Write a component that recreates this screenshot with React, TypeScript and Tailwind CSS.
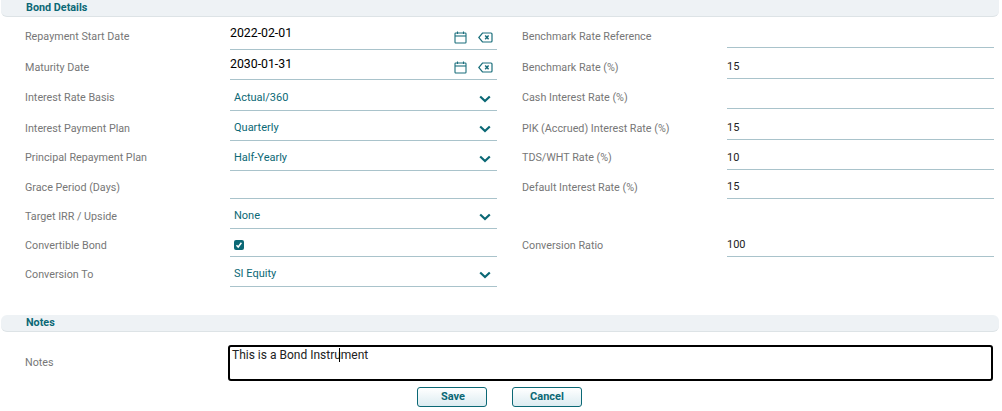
import { ReactNode } from "react";

const font = "font-['Roboto',sans-serif]";

function CalendarIcon() {
  return (
    <svg width="13" height="13" viewBox="0 0 13 13" fill="none" stroke="#1b6f7c" strokeWidth="1.1">
      <rect x="1" y="2" width="11" height="10" rx="0.8" />
      <path d="M1 5h11" />
      <path d="M3.5 0.5v2.5M9.5 0.5v2.5" />
    </svg>
  );
}

function ClearIcon() {
  return (
    <svg width="15" height="11" viewBox="0 0 15 11" fill="none" stroke="#1b6f7c" strokeWidth="1.2">
      <path d="M4.5 1H13a1 1 0 0 1 1 1v7a1 1 0 0 1-1 1H4.5L0.8 5.5z" />
      <path d="M7.2 3.6l3.4 3.6M10.6 3.6l-3.4 3.6" strokeWidth="1.5" />
    </svg>
  );
}

function Chevron() {
  return (
    <svg width="12" height="8" viewBox="0 0 12 8" fill="none" stroke="#0b6875" strokeWidth="2.2">
      <path d="M1.2 1.5L6 6l4.8-4.5" />
    </svg>
  );
}

function Field({
  label,
  h,
  pb = "pb-[4px]",
  children,
}: {
  label?: string;
  h: string;
  pb?: string;
  children?: ReactNode;
}) {
  return (
    <div className={`flex ${h}`}>
      <div className={`w-[205px] shrink-0 flex items-end text-[10.75px] leading-[14px] text-[#777777] ${pb}`}>{label}</div>
      <div className="flex-1 flex items-end border-b border-[#a9c3cb]">{children}</div>
    </div>
  );
}

function DateValue({ value, pb }: { value: string; pb: string }) {
  return (
    <div className="flex-1 flex items-end">
      <span className={`text-[12.3px] leading-[14px] text-black ${pb}`}>{value}</span>
      <span className="ml-auto flex items-center gap-[11px] pr-[4px] pb-[5px]">
        <CalendarIcon />
        <ClearIcon />
      </span>
    </div>
  );
}

function SelectValue({ value }: { value: string }) {
  return (
    <div className="flex-1 flex items-end pl-1 pr-[6px] pb-[5px] text-[11px] leading-[14px] text-[#0b6875]">
      <span>{value}</span>
      <span className="ml-auto flex mb-[2px]">
        <Chevron />
      </span>
    </div>
  );
}

function InputValue({ value }: { value?: string }) {
  return <span className="pb-[4px] text-[11px] leading-[14px] text-[#222222]">{value}</span>;
}

function SectionBar({ title, className }: { title: string; className: string }) {
  return (
    <div className={`flex items-center h-[17px] ml-px w-[998px] pl-[25px] bg-[#eef2f5] border-b border-[#dde3e6] text-[10.8px] font-bold text-[#0b6875] ${className}`}>
      {title}
    </div>
  );
}

export default function App() {
  return (
    <div className={`w-[1002px] h-[411px] bg-white overflow-hidden ${font}`}>
      <SectionBar title="Bond Details" className="rounded-b-md" />
      <div className="flex pl-[25px] pr-[8px]">
        <div className="w-[472px]">
          <Field label="Repayment Start Date" h="h-[33px]" pb="pb-[6px]">
            <DateValue value="2022-02-01" pb="pb-[9px]" />
          </Field>
          <Field label="Maturity Date" h="h-[30px]" pb="pb-[5px]">
            <DateValue value="2030-01-31" pb="pb-[8px]" />
          </Field>
          <Field label="Interest Rate Basis" h="h-[31px]" pb="pb-[6px]">
            <SelectValue value="Actual/360" />
          </Field>
          <Field label="Interest Payment Plan" h="h-[30px]" pb="pb-[5px]">
            <SelectValue value="Quarterly" />
          </Field>
          <Field label="Principal Repayment Plan" h="h-[30px]" pb="pb-[6px]">
            <SelectValue value="Half-Yearly" />
          </Field>
          <Field label="Grace Period (Days)" h="h-[28px]" />
          <Field label="Target IRR / Upside" h="h-[30px]" pb="pb-[5px]">
            <SelectValue value="None" />
          </Field>
          <Field label="Convertible Bond" h="h-[28px]">
            <span className="ml-1 mb-[6px] w-[10px] h-[10px] rounded-[2px] bg-[#0b6875] flex items-center justify-center">
              <svg width="8" height="8" viewBox="0 0 8 8" fill="none" stroke="white" strokeWidth="1.5">
                <path d="M1.5 4.2L3.2 6L6.4 1.8" />
              </svg>
            </span>
          </Field>
          <Field label="Conversion To" h="h-[30px]" pb="pb-[5px]">
            <SelectValue value="SI Equity" />
          </Field>
        </div>
        <div className="w-[472px] ml-[25px]">
          <Field label="Benchmark Rate Reference" h="h-[31px]" />
          <Field label="Benchmark Rate (%)" h="h-[31px]">
            <InputValue value="15" />
          </Field>
          <Field label="Cash Interest Rate (%)" h="h-[30px]" />
          <Field label="PIK (Accrued) Interest Rate (%)" h="h-[31px]">
            <InputValue value="15" />
          </Field>
          <Field label="TDS/WHT Rate (%)" h="h-[30px]" pb="pb-[5px]">
            <InputValue value="10" />
          </Field>
          <Field label="Default Interest Rate (%)" h="h-[29px]">
            <InputValue value="15" />
          </Field>
          <div className="h-[30px]" />
          <Field label="Conversion Ratio" h="h-[28px]">
            <InputValue value="100" />
          </Field>
        </div>
      </div>
      <SectionBar title="Notes" className="rounded-md mt-[28px]" />
      <div className="flex pl-[25px] mt-[13px]">
        <div className="w-[203px] flex items-center text-[10.75px] text-[#777777]">Notes</div>
        <div className="w-[765px] h-[36px] border-2 border-black rounded-[3px] pl-[2px] pt-px text-[12px] leading-[14px] text-[#222222] relative">
          This is a Bond Instrument
          <span className="absolute left-[109px] top-px w-px h-[14px] bg-black" />
        </div>
      </div>
      <div className="flex justify-center gap-[25px] mt-[6px] pr-[3px]">
        <button className="w-[70px] h-[20px] pl-[2px] rounded-[3px] border border-[#0b6875] bg-gradient-to-b from-white to-[#dcecf1] text-[11px] font-bold text-[#0b6875]">
          Save
        </button>
        <button className="w-[70px] h-[20px] rounded-[3px] border border-[#0b6875] bg-gradient-to-b from-white to-[#dcecf1] text-[11px] font-bold text-[#0b6875]">
          Cancel
        </button>
      </div>
    </div>
  );
}
